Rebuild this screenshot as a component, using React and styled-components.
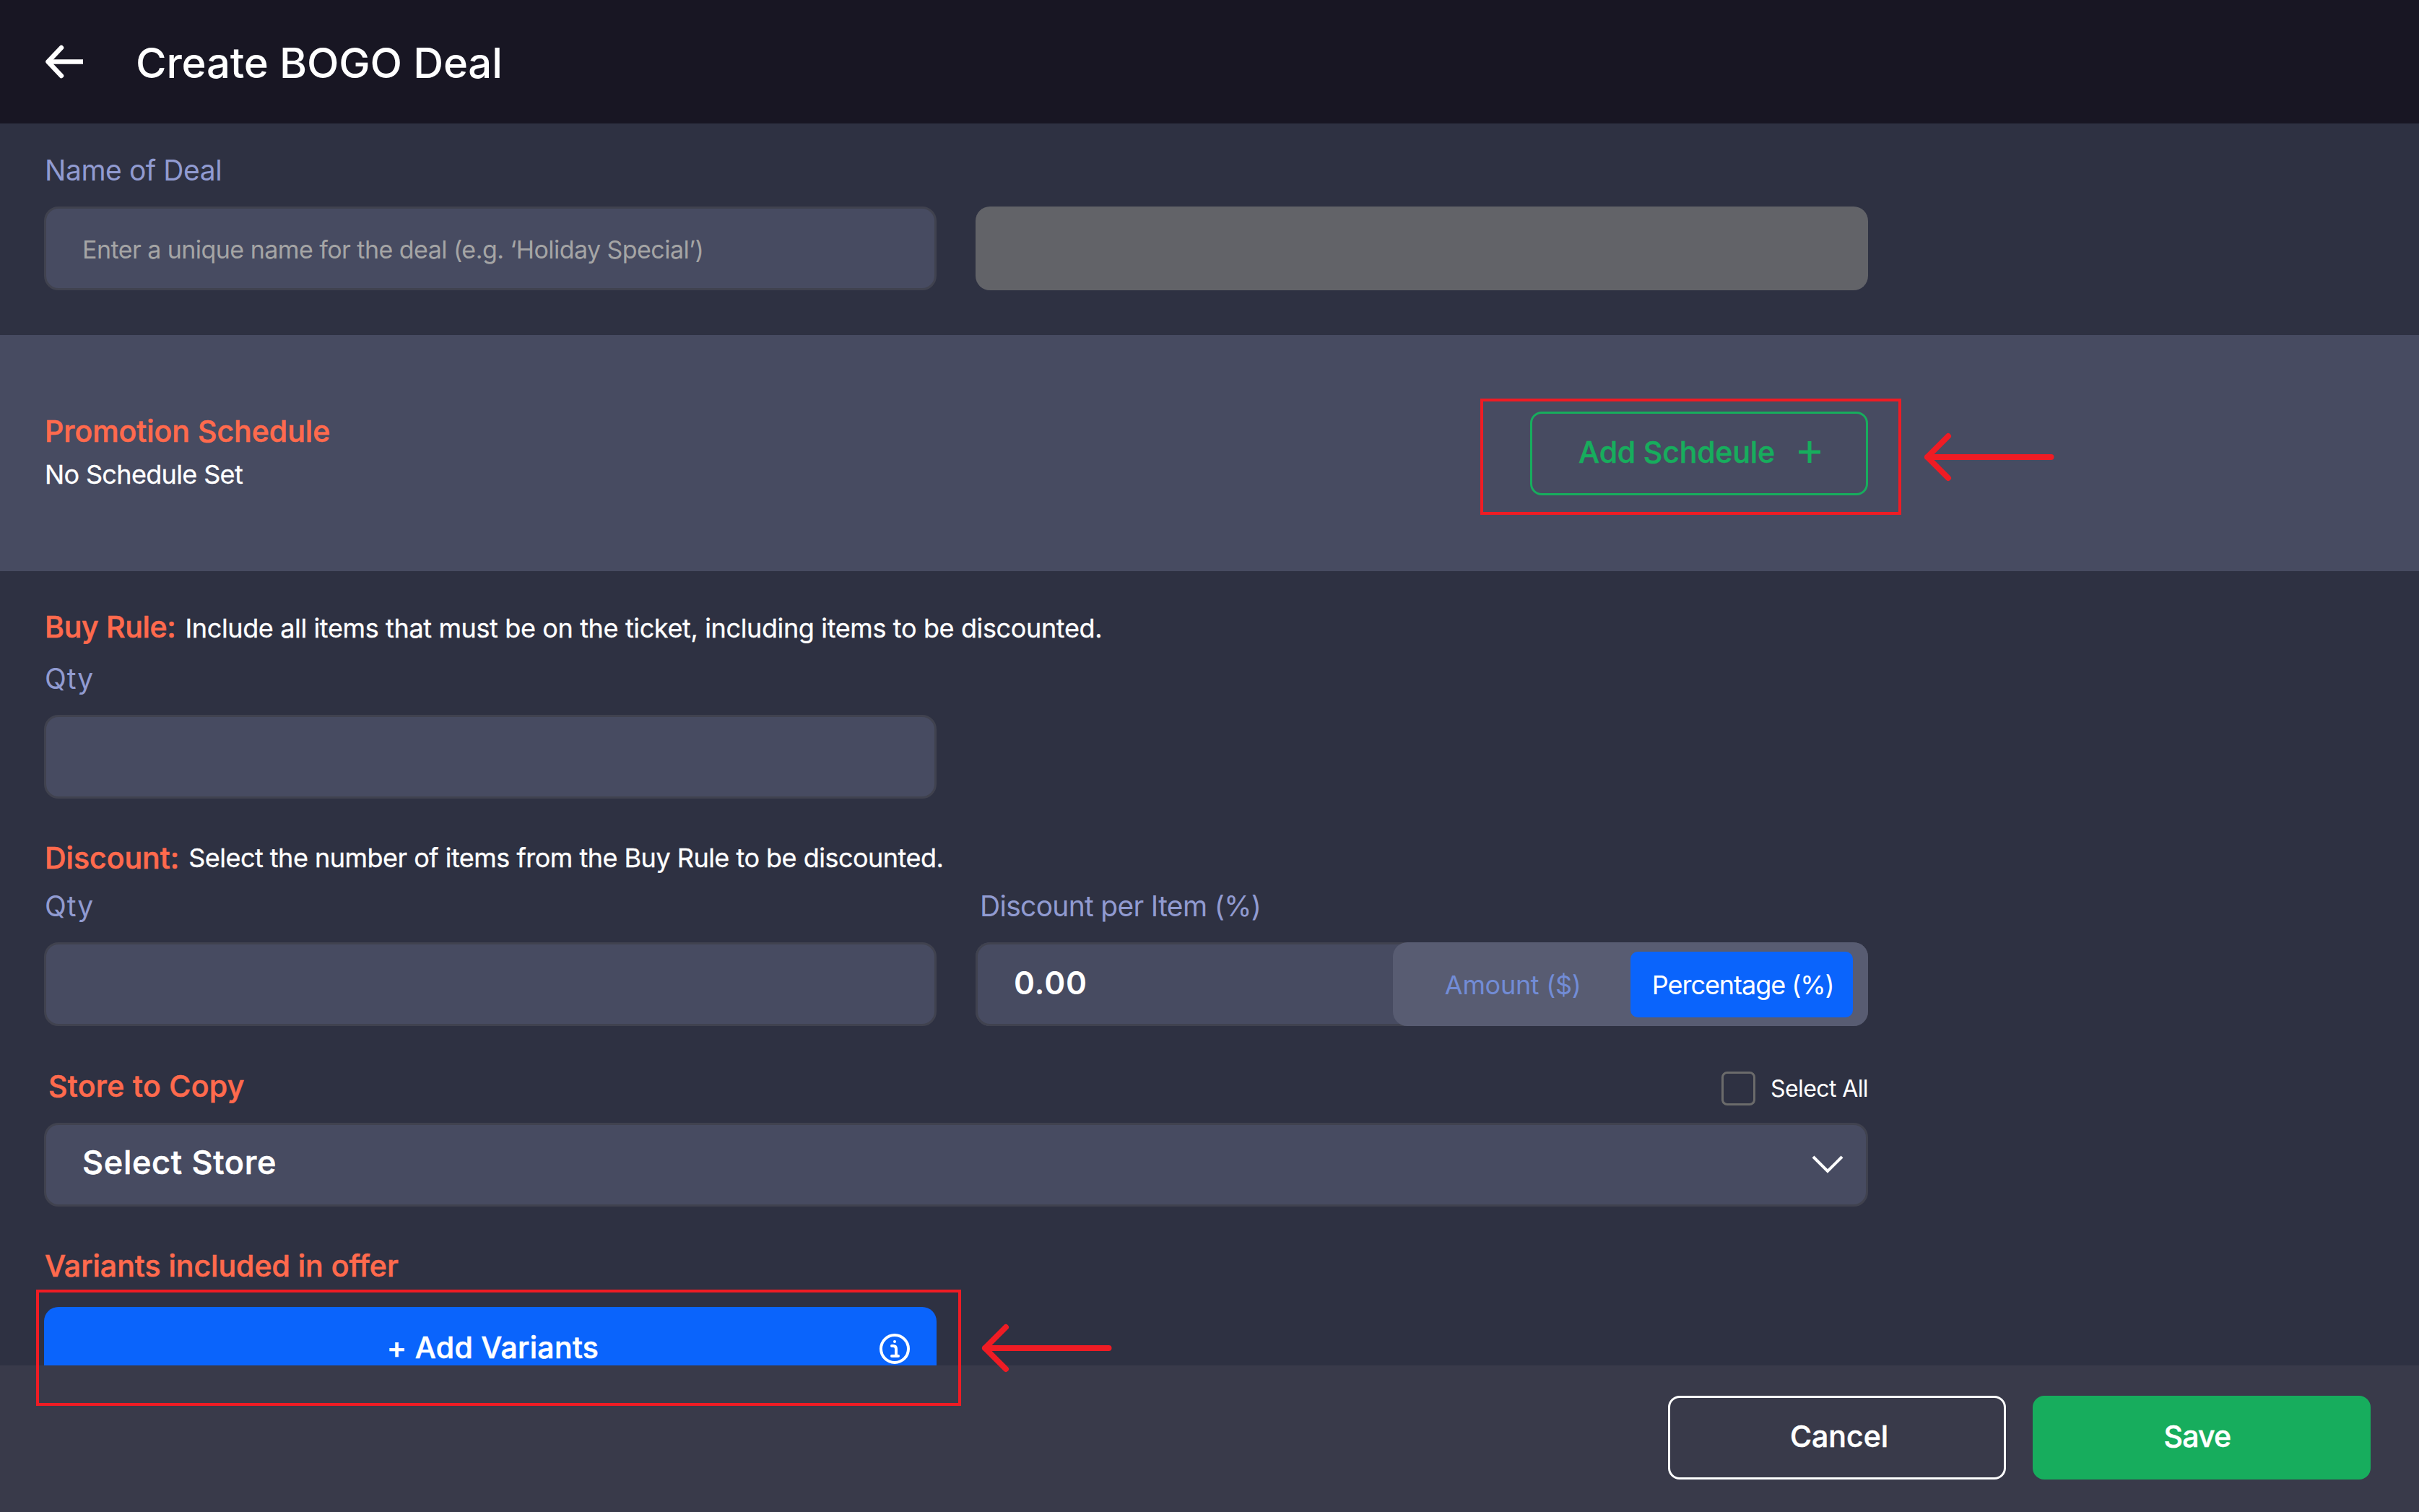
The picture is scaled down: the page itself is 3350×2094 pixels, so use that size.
import { useState } from "react";
import styled, { createGlobalStyle } from "styled-components";

const GlobalStyle = createGlobalStyle`
  * {
    box-sizing: border-box;
  }
  body {
    margin: 0;
    background: #2e3142;
    color: #fff;
    font-family: Inter, "Liberation Sans", sans-serif;
  }
  button, input {
    font-family: inherit;
    color: inherit;
    margin: 0;
  }
`;

const Page = styled.div`
  position: relative;
  display: flex;
  flex-direction: column;
  width: 3350px;
  height: 2094px;
  overflow: hidden;
`;

const Header = styled.header`
  display: flex;
  align-items: center;
  flex: none;
  height: 171px;
  padding-left: 61px;
  background: #181623;
`;

const BackButton = styled.button`
  display: flex;
  width: 56px;
  height: 50px;
  padding: 0;
  border: none;
  background: none;
`;

const Title = styled.h1`
  margin: 0;
  padding: 3px 0 0 71px;
  font-size: 58px;
  font-weight: 500;
  line-height: 70px;
  letter-spacing: -0.15px;
`;

const Content = styled.main`
  flex: 1;
  min-height: 0;
  overflow: hidden;
`;

const NameSection = styled.section`
  display: grid;
  grid-template-columns: 1236px 1236px;
  column-gap: 54px;
  align-items: end;
  height: 293px;
  padding: 40px 61px 62px;
`;

const ScheduleSection = styled.section`
  display: flex;
  justify-content: space-between;
  align-items: flex-start;
  height: 327px;
  padding: 106px 763px 0 61px;
  background: #474b61;
`;

const FormSection = styled.section`
  width: 2587px;
  padding: 52px 0 0 61px;
`;

const Label = styled.label`
  display: block;
  padding-left: ${({ $indent = 1 }) => $indent}px;
  margin-bottom: 25px;
  color: #919bd1;
  font-size: 39px;
  font-weight: 400;
  line-height: 50px;
  letter-spacing: ${({ $spacing = -0.45 }) => $spacing}px;
`;

const Heading = styled.h2`
  margin: 0;
  color: #ff6a4d;
  font-size: 41px;
  font-weight: 500;
  line-height: 50px;
  letter-spacing: ${({ $spacing = 0 }) => $spacing}px;
  padding-left: ${({ $indent = 1 }) => $indent}px;
  -webkit-text-stroke: 0.6px currentColor;
`;

const Note = styled.p`
  margin: 0;
  padding: ${({ $drop = 0 }) => $drop}px 0 0 ${({ $indent = 0 }) => $indent}px;
  font-size: 36px;
  font-weight: 400;
  line-height: 50px;
  letter-spacing: ${({ $spacing = -0.45 }) => $spacing}px;
  -webkit-text-stroke: 0.3px currentColor;
`;

const ScheduleText = styled.div`
  display: flex;
  flex-direction: column;
  gap: 10px;
  padding-top: 2px;
`;

const RuleRow = styled.div`
  display: flex;
  align-items: center;
  gap: 13px;
  height: 50px;
  margin: ${({ $top = 0 }) => $top}px 0 ${({ $bottom }) => $bottom}px;
`;

const FieldRow = styled.div`
  display: grid;
  grid-template-columns: 1236px 1236px;
  column-gap: 54px;
`;

const Input = styled.input`
  display: block;
  width: 100%;
  height: 116px;
  padding: 3px 46px 0 50px;
  border: 3px solid #40424f;
  border-radius: 20px;
  background: #474b61;
  font-size: 34px;
  letter-spacing: -0.55px;
  outline: none;

  &::placeholder {
    color: #a5a5a5;
    opacity: 1;
  }
`;

const DisabledField = styled.div`
  height: 116px;
  border-radius: 20px;
  background: #626368;
`;

const AmountField = styled.div`
  display: flex;
  justify-content: space-between;
  height: 116px;
  border-radius: 20px;
  background: #474b61;
  box-shadow: inset 0 0 0 3px #40424f;
`;

const AmountValue = styled.span`
  padding-left: 53px;
  font-size: 44px;
  font-weight: 600;
  line-height: 112px;
  letter-spacing: 0.8px;
`;

const Toggle = styled.div`
  display: flex;
  justify-content: flex-end;
  align-items: center;
  width: 658px;
  padding-right: 21px;
  border-radius: 20px;
  background: #585c72;
`;

const ToggleOption = styled.button`
  width: ${({ $active }) => ($active ? 308 : 330)}px;
  height: 91px;
  padding: 1px 0 0 3px;
  border: none;
  border-radius: 10px;
  background: ${({ $active }) => ($active ? "#0a64fc" : "transparent")};
  color: ${({ $active }) => ($active ? "#fff" : "#728cd6")};
  font-size: 36px;
  letter-spacing: ${({ $active }) => ($active ? -1.05 : -0.3)}px;
`;

const StoreRow = styled.div`
  display: flex;
  justify-content: space-between;
  align-items: center;
  height: 58px;
  margin: 54px 0 22px;
`;

const SelectAll = styled.label`
  display: flex;
  align-items: center;
  gap: 21px;
  padding-top: 7px;
  font-size: 32px;
  letter-spacing: -0.6px;
`;

const CheckBox = styled.span`
  width: 47px;
  height: 47px;
  border: 3px solid #6b6b6b;
  border-radius: 8px;
`;

const StoreSelect = styled.div`
  display: flex;
  justify-content: space-between;
  align-items: center;
  height: 116px;
  margin-bottom: 57px;
  padding: 0 30px 0 50px;
  border: 3px solid #40424f;
  border-radius: 20px;
  background: #474b61;
  font-size: 45px;
  font-weight: 500;
  letter-spacing: 0.7px;
  -webkit-text-stroke: 0.6px currentColor;

  span {
    padding-bottom: 7px;
  }
`;

const Button = styled.button`
  display: flex;
  justify-content: center;
  align-items: center;
  width: 468px;
  height: 116px;
  padding: 0 ${({ $right = 0 }) => $right}px 4px ${({ $left = 0 }) => $left}px;
  border: 3px solid ${({ $border }) => $border};
  border-radius: 16px;
  background: ${({ $fill = "transparent" }) => $fill};
  color: ${({ $color = "#fff" }) => $color};
  font-size: 41px;
  font-weight: 500;
  letter-spacing: ${({ $spacing = 0 }) => $spacing}px;
  gap: 32px;
  -webkit-text-stroke: 0.5px currentColor;
`;

const AddVariants = styled.button`
  display: grid;
  grid-template-columns: 1fr auto 1fr;
  align-items: center;
  width: 1236px;
  height: 116px;
  margin-top: 32px;
  padding: 0 36px 0 43px;
  border: none;
  border-radius: 20px;
  background: #0a64fc;
  font-size: 41px;
  font-weight: 500;
  letter-spacing: 0.3px;
  -webkit-text-stroke: 0.6px currentColor;

  span {
    grid-column: 2;
    padding-bottom: 4px;
  }
  svg {
    justify-self: end;
  }
`;

const Footer = styled.footer`
  display: flex;
  justify-content: flex-end;
  flex: none;
  gap: 37px;
  height: 203px;
  padding: 42px 67px 0 0;
  background: #393a4a;
`;

// callouts drawn over the page
const Highlight = styled.div`
  position: absolute;
  left: ${({ $x }) => $x}px;
  top: ${({ $y }) => $y}px;
  width: ${({ $width }) => $width}px;
  height: 161px;
  border: 4px solid #ef1c24;
  pointer-events: none;
`;

const Pointer = styled.svg`
  position: absolute;
  left: ${({ $x }) => $x}px;
  top: ${({ $y }) => $y}px;
`;

function Callout({ x, y, width, arrowX, arrowY }) {
  return (
    <>
      <Highlight $x={x} $y={y} $width={width} />
      <Pointer
        $x={arrowX}
        $y={arrowY}
        width="182"
        height="68"
        fill="none"
        stroke="#ef1c24"
        strokeWidth="8"
        strokeLinecap="round"
        strokeLinejoin="round"
      >
        <path d="M34 5 L5 34 L34 63 M5 34 H176.5" />
      </Pointer>
    </>
  );
}

const options = [
  { id: "amount", label: "Amount ($)" },
  { id: "percentage", label: "Percentage (%)" },
];

export default function App() {
  const [type, setType] = useState("percentage");

  return (
    <>
      <GlobalStyle />
      <Page>
        <Header>
          <BackButton aria-label="Back">
            <svg width="56" height="50" fill="none" stroke="#fff" strokeWidth="6.5">
              <path d="M24 5 L5.5 24.5 L24 44" strokeLinecap="round" strokeLinejoin="round" />
              <path d="M5.5 24.5 H54" />
            </svg>
          </BackButton>
          <Title>Create BOGO Deal</Title>
        </Header>

        <Content>
          <NameSection>
            <div>
              <Label htmlFor="name">Name of Deal</Label>
              <Input id="name" placeholder="Enter a unique name for the deal (e.g. ‘Holiday Special’)" />
            </div>
            <DisabledField />
          </NameSection>

          <ScheduleSection>
            <ScheduleText>
              <Heading>Promotion Schedule</Heading>
              <Note $indent={1} $spacing={-0.65}>No Schedule Set</Note>
            </ScheduleText>
            <Button $border="#17ad5d" $color="#17ad5d" $left={2} $spacing={-0.15}>
              Add Schdeule
              <svg width="32" height="32" stroke="#17ad5d" strokeWidth="5">
                <path d="M16 1 V31 M1 16 H31" />
              </svg>
            </Button>
          </ScheduleSection>

          <FormSection>
            <RuleRow $bottom={22}>
              <Heading $spacing={-0.3}>Buy Rule:</Heading>
              <Note $drop={4} $spacing={-0.37}>
                Include all items that must be on the ticket, including items to be discounted.
              </Note>
            </RuleRow>
            <FieldRow>
              <div>
                <Label htmlFor="buyQty" $spacing={0.9}>Qty</Label>
                <Input id="buyQty" />
              </div>
            </FieldRow>

            <RuleRow $top={57} $bottom={17}>
              <Heading>Discount:</Heading>
              <Note $spacing={-0.51}>Select the number of items from the Buy Rule to be discounted.</Note>
            </RuleRow>
            <FieldRow>
              <div>
                <Label htmlFor="discountQty" $spacing={0.9}>Qty</Label>
                <Input id="discountQty" />
              </div>
              <div>
                <Label $indent={6} $spacing={-0.7}>Discount per Item (%)</Label>
                <AmountField>
                  <AmountValue>0.00</AmountValue>
                  <Toggle>
                    {options.map((option) => (
                      <ToggleOption
                        key={option.id}
                        $active={type === option.id}
                        onClick={() => setType(option.id)}
                      >
                        {option.label}
                      </ToggleOption>
                    ))}
                  </Toggle>
                </AmountField>
              </div>
            </FieldRow>

            <StoreRow>
              <Heading $indent={6} $spacing={0.35}>Store to Copy</Heading>
              <SelectAll>
                <CheckBox />
                Select All
              </SelectAll>
            </StoreRow>
            <StoreSelect>
              <span>Select Store</span>
              <svg width="46" height="28" fill="none" stroke="#fff" strokeWidth="4">
                <path d="M3 3 L23 23 L43 3" />
              </svg>
            </StoreSelect>

            <Heading>Variants included in offer</Heading>
            <AddVariants>
              <span>+ Add Variants</span>
              <svg width="44" height="44" fill="none" stroke="#fff" strokeWidth="4">
                <circle cx="22" cy="22" r="19" />
                <path d="M18 18 H20 Q24 18 24 22 V32 M18 32 H27" strokeLinecap="round" />
                <circle cx="22" cy="12" r="2" fill="#fff" stroke="none" />
              </svg>
            </AddVariants>
          </FormSection>
        </Content>

        <Footer>
          <Button $border="#fff" $left={6}>Cancel</Button>
          <Button $border="#17ad5d" $fill="#17ad5d" $right={12} $spacing={-0.8}>Save</Button>
        </Footer>

        <Callout x={2050} y={552} width={583} arrowX={2664} arrowY={599} />
        <Callout x={50} y={1786} width={1281} arrowX={1359} arrowY={1833} />
      </Page>
    </>
  );
}
